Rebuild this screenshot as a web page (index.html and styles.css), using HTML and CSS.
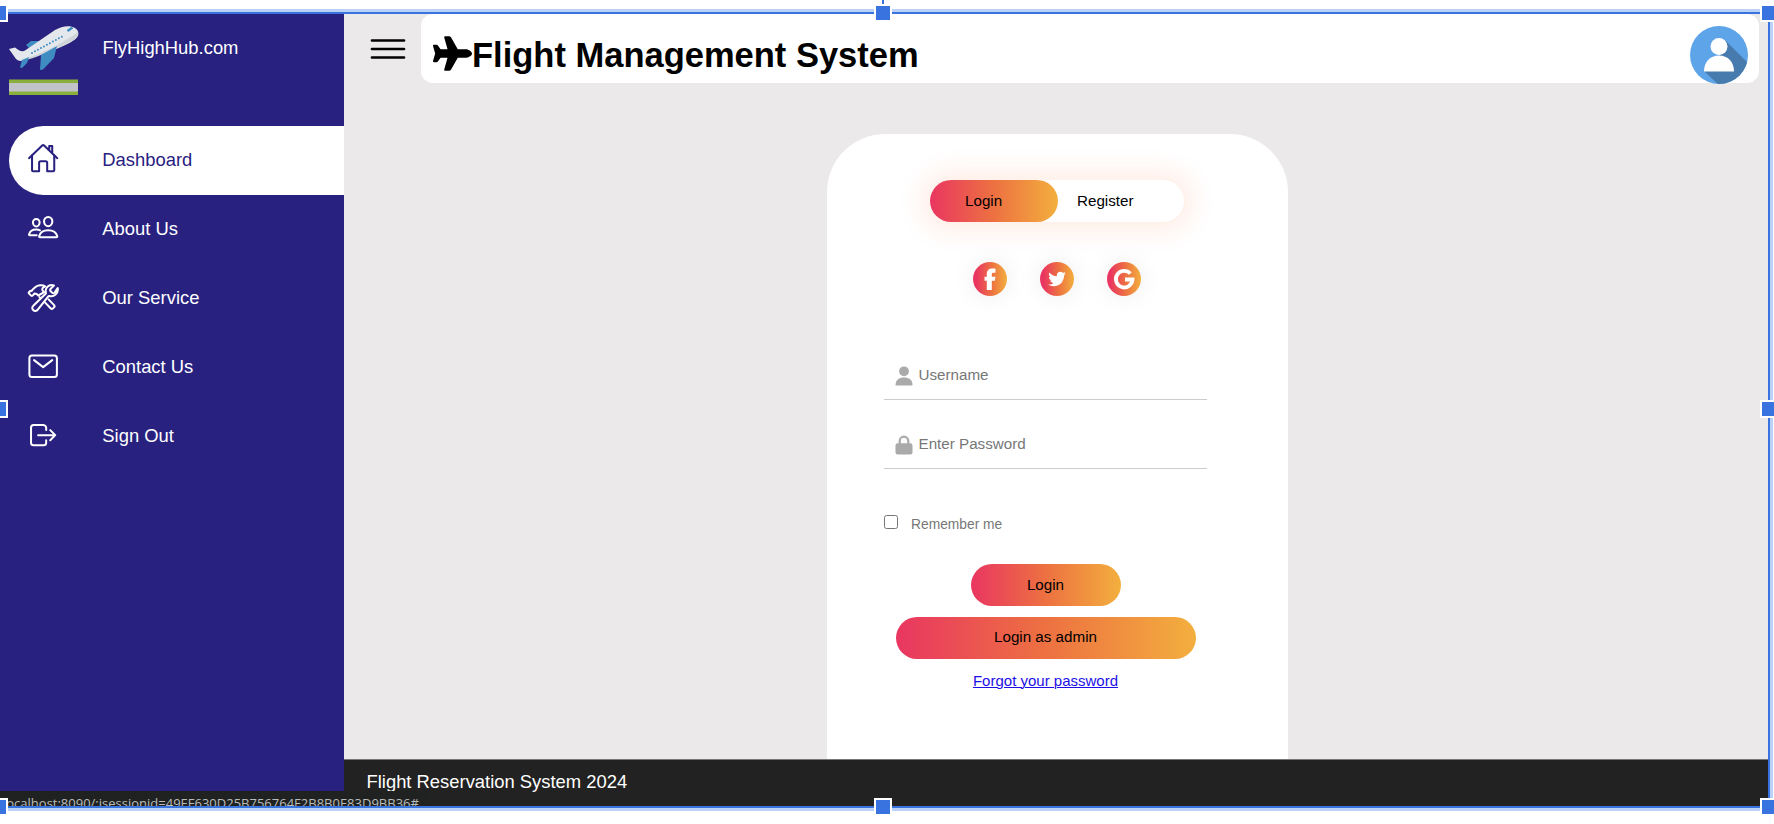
FILE: index.html
```html
<!DOCTYPE html>
<html lang="en">
<head>
<meta charset="utf-8">
<title>Flight Management System</title>
<link rel="stylesheet" href="styles.css">
</head>
<body>
<div class="frame">
  <div class="app">
    <nav class="sidebar">
      <a class="brand">
        <svg class="brand-logo" viewBox="0 0 70 70">
          <path fill="#3f8cc2" d="M17 19l5-4 12 0 4 3-16 6z"/>
          <path fill="#e4e8ec" d="M0 23l6-1.500c4 3 7 5 10 3L46 4c7-4 15-5 20-2 4 2.500 4.500 7 1.500 10-4 4-11 7-19 10.500L19 33c-5 2-9 3-12 0z"/>
          <path fill="#cfd4d9" d="M11 34C27 30 50 20 69 6c.5 3-1 5.500-4 8C57 19 24 33 17 34z"/>
          <path fill="#3f8cc2" d="M48 20l-3 12-11 11.500-3 .5 1-15z"/>
          <path fill="#3f8cc2" d="M20 31l-2 6-5 5-2-.5 2-7.500z"/>
          <path stroke="#3f8cc2" stroke-width="2" stroke-linecap="round" stroke-dasharray="0 3.400" d="M23 27L55 9.500" fill="none"/>
          <path stroke="#3f8cc2" stroke-width="2.500" d="M58.500 5l5-3.500" fill="none"/>
          <path fill="#8aae3c" d="M0 53.500h69v15.500H0z"/>
          <path fill="#c2c3c9" d="M0 57h69v8.500H0z"/>
        </svg>
        <span>FlyHighHub.com</span>
      </a>
      <a class="item active">
        <svg class="icon" viewBox="0 0 512 512"><path d="M80 212v236a16 16 0 0016 16h96V328a24 24 0 0124-24h80a24 24 0 0124 24v136h96a16 16 0 0016-16V212"/><path d="M480 256L266.890 52c-5-5.280-16.690-5.340-21.780 0L32 256M400 179V64h-48v69"/></svg>
        <span>Dashboard</span>
      </a>
      <a class="item">
        <svg class="icon" viewBox="0 0 512 512"><path d="M402 168c-2.930 40.670-33.100 72-66 72s-63.120-31.320-66-72c-3-42.310 26.370-72 66-72s69 30.460 66 72z"/><path d="M336 304c-65.170 0-127.840 32.370-143.540 95.410-2.080 8.340 3.150 16.590 11.720 16.590h263.650c8.570 0 13.770-8.250 11.720-16.590C463.850 335.360 401.180 304 336 304z"/><path d="M200 185.940c-2.340 32.480-26.720 58.060-53 58.060s-50.700-25.570-53-58.060C91.610 152.150 115.340 128 147 128s55.390 24.770 53 57.940z"/><path d="M206 306c-18.050-8.270-37.930-11.450-59-11.450-52 0-102.100 25.850-114.650 76.200-1.650 6.660 2.530 13.250 9.370 13.250H154"/></svg>
        <span>About Us</span>
      </a>
      <a class="item">
        <svg class="icon" viewBox="0 0 512 512"><path d="M436.670 184.110a27.170 27.170 0 01-38.300 0l-22.480-22.490a27.150 27.150 0 010-38.290l50.890-50.890a.85.85 0 00-.26-1.380C393.680 57.200 351.090 64.790 324.050 91c-25.880 25.080-33.850 60.230-24.330 96.220a15.900 15.900 0 01-4.270 15.430L104 388a48 48 0 1067 67l166.850-211.280a16 16 0 0115.220-4.360c35.630 8.610 73.630 1.490 98.930-23.320 26-25.500 41-74 35.300-103a.85.85 0 00-1.380-.28z"/><path d="M218 276l-20-20m76-78l-24-24c-14-16-10-40 10-52l28-18c-46-28-120-18-158 14l-40 36c-8 6-6 24-16 24-22-6-24 0-42 18-8 8-8 14 0 22l34 34c8 8 14 8 22 0l18-18c6-8 8-20 18-16l28 8c10 4 18 16 26 24zM342 292l84 86c14 14 14 28 2 40l-16 16c-12 12-26 10-38-2l-86-90"/></svg>
        <span>Our Service</span>
      </a>
      <a class="item">
        <svg class="icon" viewBox="0 0 512 512"><rect x="38" y="88" width="436" height="340" rx="40"/><path d="M112 160l144 112 144-112"/></svg>
        <span>Contact Us</span>
      </a>
      <a class="item">
        <svg class="icon" viewBox="0 0 512 512"><path d="M304 336v40a40 40 0 01-40 40H104a40 40 0 01-40-40V136a40 40 0 0140-40h152c22.090 0 48 17.910 48 40v40M368 336l80-80-80-80M176 256h256"/></svg>
        <span>Sign Out</span>
      </a>
    </nav>
    <div class="main">
      <header class="topbar">
        <svg class="menu" viewBox="0 0 36 24"><path d="M2 3.500h32M2 12h32M2 20.500h32"/></svg>
        <div class="title-bar">
          <svg class="plane" viewBox="0 0 576 512"><path d="M482.300 192c34.200 0 93.700 29 93.700 64c0 36-59.500 64-93.700 64l-116.600 0L265.200 495.900c-5.700 10-16.300 16.100-27.800 16.100l-56.200 0c-10.600 0-18.300-10.200-15.400-20.400l49-171.600L112 320 68.800 377.600c-3 4-7.800 6.400-12.800 6.400l-42 0c-7.800 0-14-6.300-14-14c0-1.300 .2-2.600 .5-3.900L32 256 .5 145.900c-.4-1.300-.5-2.600-.5-3.900c0-7.800 6.300-14 14-14l42 0c5 0 9.800 2.400 12.800 6.400L112 192l102.900 0-49-171.600C162.900 10.200 170.600 0 181.200 0l56.200 0c11.500 0 22.100 6.200 27.800 16.100L365.700 192l116.600 0z"/></svg>
          <h1>Flight Management System</h1>
          <svg class="avatar" viewBox="0 0 58 58">
            <defs><clipPath id="disc"><circle cx="29" cy="29" r="29"/></clipPath></defs>
            <g clip-path="url(#disc)">
              <path fill="#5ea4e8" d="M0 0h58v58H0z"/>
              <path fill="#477bad" d="M35 14l27 27v20H31L14.500 45.500 29 32z"/>
            </g>
            <circle cx="29" cy="20.500" r="8.500" fill="#fff"/>
            <path fill="#fff" d="M14 45.500C14 36 20 29.500 29 29.500S44 36 44 45.500z"/>
          </svg>
        </div>
      </header>
      <section class="stage">
        <div class="card">
          <div class="toggle"><button class="tab selected">Login</button><button class="tab">Register</button></div>
          <div class="social">
            <a class="dot"><svg viewBox="0 0 34 34"><path d="M22.500 6.800v4h-2c-1.300 0-1.700.6-1.700 1.700v2.300h3.700l-.6 3.900h-3.100V28h-5v-9.300h-2.300v-3.900h2.300v-2.600c0-3.800 2-5.700 5.600-5.700 1.300 0 2.400.1 3.100.3z"/></svg></a>
            <a class="dot"><svg viewBox="0 0 34 34"><path transform="translate(8.200 8.200) scale(.0344)" d="M459.370 151.716c.325 4.548.325 9.097.325 13.645 0 138.720-105.583 298.558-298.558 298.558-59.452 0-114.680-17.219-161.137-47.106 8.447.974 16.568 1.299 25.340 1.299 49.055 0 94.213-16.568 130.274-44.832-46.132-.975-84.792-31.188-98.112-72.772 6.498.974 12.995 1.624 19.818 1.624 9.421 0 18.843-1.300 27.614-3.573-48.081-9.747-84.143-51.980-84.143-102.985v-1.299c13.969 7.797 30.214 12.670 47.431 13.319-28.264-18.843-46.781-51.005-46.781-87.391 0-19.492 5.197-37.360 14.294-52.954 51.655 63.675 129.300 105.258 216.365 109.807-1.624-7.797-2.599-15.918-2.599-24.040 0-57.828 46.782-104.934 104.934-104.934 30.213 0 57.502 12.670 76.670 33.137 23.715-4.548 46.456-13.320 66.599-25.340-7.798 24.366-24.366 44.833-46.132 57.827 21.117-2.273 41.584-8.122 60.426-16.243-14.292 20.791-32.161 39.308-52.628 54.253z"/></svg></a>
            <a class="dot"><svg viewBox="0 0 34 34"><path class="ring" d="M23.400 11.600A8.300 8.300 0 1 0 25.500 17.500H18"/></svg></a>
          </div>
          <form class="form">
            <label class="field">
              <svg viewBox="0 0 18 20"><circle cx="9" cy="5.300" r="4.900"/><path d="M.5 19.500C.5 14 4 11.600 9 11.600s8.500 2.400 8.500 7.100c0 .5-.3.800-.8.800z"/></svg>
              <input type="text" placeholder="Username">
            </label>
            <label class="field">
              <svg viewBox="0 0 18 20"><path class="shackle" d="M4.700 9V6a4.300 4.300 0 018.600 0v3"/><rect x=".5" y="8.300" width="17" height="11.200" rx="2.200"/></svg>
              <input type="password" placeholder="Enter Password">
            </label>
            <label class="remember"><span class="box"></span><span class="remember-text">Remember me</span></label>
            <button type="button" class="submit">Login</button>
            <button type="button" class="submit wide">Login as admin</button>
            <a class="forgot" href="#">Forgot your password</a>
          </form>
        </div>
      </section>
      <footer class="footer">Flight Reservation System 2024</footer>
    </div>
    <div class="status">localhost:8090/;jsessionid=49EF630D25B756764F2B8B0E83D9BB36#</div>
  </div>
</div>
<i class="stem"></i>
<i class="handle left top"></i><i class="handle center top"></i><i class="handle right top"></i>
<i class="handle left middle"></i><i class="handle right middle"></i>
<i class="handle left bottom"></i><i class="handle center bottom"></i><i class="handle right bottom"></i>
</body>
</html>
```
FILE: styles.css
```css
* { box-sizing: border-box; }
body {
  margin: 0;
  height: 824px;
  padding: 9px 1px 0 0;
  position: relative;
  overflow: hidden;
  background: #fff;
  font-family: "Liberation Sans", Arial, sans-serif;
}
.frame { height: 802px; border: solid #bcd1f7; border-width: 3px 3px 3px 0; }
.app {
  height: 796px;
  border: solid #3973e0;
  border-width: 2px 2px 2px 0;
  display: flex;
  position: relative;
  overflow: hidden;
  background: #ebe9ea;
}
button, input { font-family: inherit; font-size: 15.2px; border: 0; padding: 0; background: none; }

/* Sidebar */
.sidebar { width: 344px; background: #28217f; flex: none; color: #fff; font-size: 18.4px; }
.brand { display: flex; padding: 12px 0 0 9px; height: 112px; }
.brand-logo { width: 70px; height: 70px; }
.brand span { padding: 11px 0 0 23.500px; line-height: 21px; }
.item { display: flex; align-items: center; height: 69.1px; margin-left: 9px; padding-left: 18px; }
.icon {
  width: 32.300px; height: 32.300px; margin-top: -4px;
  fill: none; stroke: currentColor; stroke-width: 32;
  stroke-linecap: round; stroke-linejoin: round;
}
.item span { margin: -2px 0 0 43px; }
.item.active { background: #fff; color: #28217f; border-radius: 35px 0 0 35px; }

/* Main column */
.main { flex: 1; display: flex; flex-direction: column; }
.topbar { display: flex; height: 69px; padding: 0 9px 0 26px; }
.menu { width: 36px; height: 24px; margin: 23px 15px 0 0; fill: none; stroke: #000; stroke-width: 2.700; stroke-linecap: round; }
.title-bar { flex: 1; display: flex; background: #fff; border-radius: 12px; padding: 0 11px 0 12px; }
.plane { width: 39px; height: 35px; margin-top: 22px; }
h1 { margin: 20px 0 0 0; font-size: 34.500px; line-height: 42px; white-space: nowrap; }
.avatar { width: 58px; height: 58px; margin: 12px 0 0 auto; }

.stage { flex: 1; padding: 51px 0 0 483px; }
.card {
  width: 461px; height: 100%;
  background: #fff;
  border-radius: 58px 58px 0 0;
  padding-top: 46px;
}
.toggle {
  display: flex;
  width: 254px; height: 42px;
  margin-left: 103px;
  border-radius: 30px;
  box-shadow: 0 0 23px 10px #ff61241c;
}
.tab { width: 98px; text-align: left; padding: 0 0 2px 19px; }
.tab.selected { width: 128px; padding-left: 35px; }
.tab.selected, .submit { border-radius: 30px; background: linear-gradient(to right, #e93661, #ed7141 50%, #f3af3e); }
.social { display: flex; gap: 33.300px; margin: 40px 0 0 145.500px; }
.dot {
  width: 34px; height: 34px; border-radius: 50%;
  background: linear-gradient(to right, #e93661 10%, #ed7141 55%, #f3af3e);
  box-shadow: 0 0 20px #7f7f7f26;
}
.dot svg { display: block; fill: #fff; }
.dot .ring { fill: none; stroke: #fff; stroke-width: 3.800; }

/* Form */
.form { width: 323px; margin: 43.500px 0 0 57px; display: flex; flex-direction: column; }
.field { display: flex; height: 60px; padding: 26px 0 0 11px; margin-bottom: 9px; border-bottom: 1px solid #ccc; }
.field svg { width: 18px; height: 20px; fill: #aaa; }
.field .shackle { fill: none; stroke: #aaa; stroke-width: 2.200; }
.field input { width: 270px; height: 20px; margin-left: 5.500px; margin-top: -1px; color: #777; outline: 0; }
.field input::placeholder { color: #777; opacity: 1; }
.remember { display: flex; height: 49px; margin-top: 37px; font-size: 13.800px; color: #777; }
.box { width: 14px; height: 14px; border: 1px solid #767676; border-radius: 2.500px; }
.remember-text { margin: 1px 0 0 13px; line-height: 17px; }
.submit { width: 150px; height: 42px; margin: 0 auto 11px; padding-bottom: 1px; }
.submit.wide { width: 300px; padding-bottom: 2px; }
.forgot { margin: 2px auto 0; font-size: 15px; line-height: 18px; color: #1c10e6; text-decoration-thickness: 1px; }

.footer { height: 47px; border-top: 1px solid #777; background: #222; color: #fff; padding: 11px 0 0 22.500px; font-size: 18.400px; line-height: 22px; }
.status {
  position: absolute; left: 0; bottom: 0;
  width: 429px; height: 15px;
  padding: 2px 0 0 3px;
  background: #202221;
  color: #b9bcbc;
  font: 13px/20px "Open Sans", "Noto Sans", sans-serif;
  white-space: nowrap;
}

/* Selection handles over the frame */
.stem { position: absolute; left: 882px; top: 0; width: 2px; height: 4px; background: #3973e0; }
.handle { position: absolute; width: 18px; height: 18px; border: 2px solid #fff; background: #3973e0; }
.left { left: -10px; }
.center { left: 874px; }
.right { left: 1760px; }
.top { top: 4px; }
.middle { top: 400px; }
.bottom { top: 798px; }
```
